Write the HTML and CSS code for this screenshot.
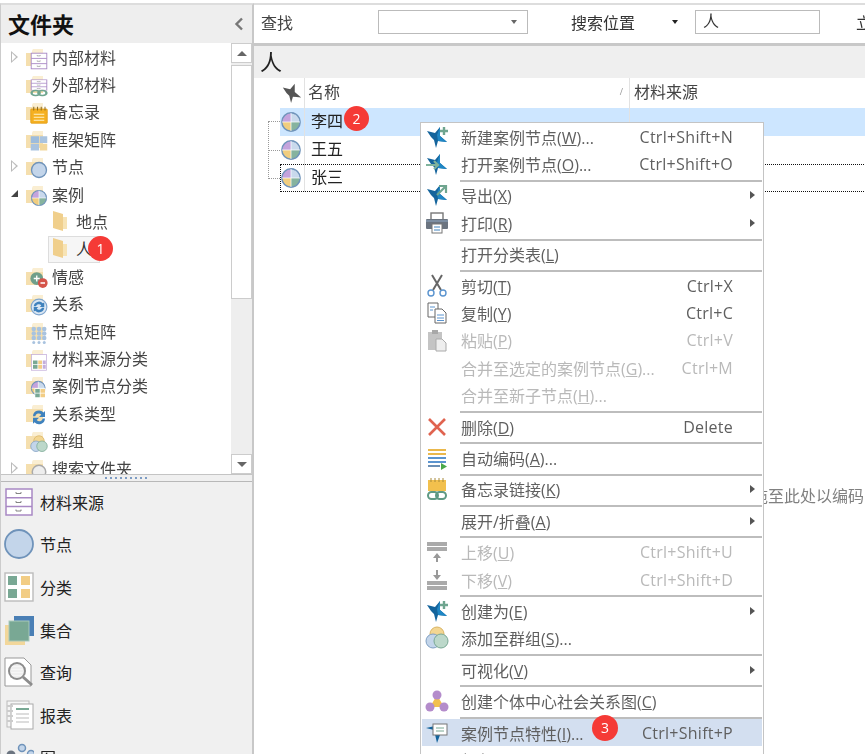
FILE: index.html
```html
<!DOCTYPE html>
<html lang="zh-CN">
<head>
    <meta charset="UTF-8">
    <meta name="viewport" content="width=device-width, initial-scale=1.0">
    <title>文件夹 - 案例</title>
    <link rel="stylesheet" href="styles.css">
</head>
<body>
    <!-- 图标定义 -->
    <svg class="defs" width="0" height="0">
        <symbol id="folder" viewBox="0 0 24 24"><path d="M1 6h6l1-4h10v17H1z" fill="#f5dfae"/><path d="M7 6l1-4h10v4z" fill="#faeed2"/></symbol>
        <symbol id="folder-open" viewBox="0 0 24 24"><path d="M1 2l10 3v17l-10-3z" fill="#f0cf8c"/><path d="M11 8h4v12h-4z" fill="#f7e3b4"/></symbol>
        <symbol id="pie" viewBox="0 0 24 24"><path d="M12 2a10 10 0 0 0-10 10h10z" fill="#c4a3dc"/><path d="M12 2a10 10 0 0 1 10 10H12z" fill="#c9d9ec"/><path d="M2 12a10 10 0 0 0 10 10V12z" fill="#f0cd7f"/><path d="M22 12a10 10 0 0 1-10 10V12z" fill="#86b39e"/><circle cx="12" cy="12" r="10" fill="none" stroke="#6f93ba" stroke-width="1.600"/><path d="M12 2v20M2 12h20" stroke="#fff" stroke-width=".8"/></symbol>
        <symbol id="drawer" viewBox="0 0 30 30" preserveAspectRatio="none"><rect x="2" y="2" width="26" height="26" fill="#fff" stroke="#a888c4" stroke-width="1.500"/><path d="M2 10.700h26M2 19.400h26" stroke="#a888c4" stroke-width="1.500"/><path d="M12 5v1.500h5V5M12 14v1.500h5V14M12 22.500v1.500h5v-1.500" fill="none" stroke="#777" stroke-width=".9"/></symbol>
        <symbol id="grid" viewBox="0 0 30 30"><rect x="1" y="1" width="28" height="28" fill="#fff" stroke="#bbb" stroke-width="1.400"/><rect x="4" y="4" width="9" height="9" fill="#79a894"/><rect x="17" y="4" width="9" height="9" fill="#f2cd85"/><rect x="4" y="17" width="9" height="9" fill="#79a894"/><rect x="17" y="17" width="9" height="9" fill="#f2cd85"/></symbol>
        <symbol id="star" viewBox="0 0 24 24"><path d="M2 6l8 2 5-6v9l7 6-9-1-2 7-2-8-3-3z" fill="#14649c"/><path d="M15 2v9l7 6-9-1-1-6z" fill="#1f86c4"/></symbol>
        <symbol id="links" viewBox="0 0 24 16" preserveAspectRatio="none"><rect x="2" y="3" width="11" height="10" rx="5" fill="none" stroke="#6fa58f" stroke-width="3"/><rect x="11" y="3" width="11" height="10" rx="5" fill="none" stroke="#6fa58f" stroke-width="3"/></symbol>
        <symbol id="circles" viewBox="0 0 24 24"><circle cx="12" cy="8" r="7" fill="#f3d692" stroke="#d9b464"/><circle cx="8" cy="15" r="7" fill="#c3d5ea" stroke="#7f9fc2"/><circle cx="16" cy="15" r="7" fill="#bcd8ca" stroke="#79a894"/></symbol>
        <symbol id="cycle" viewBox="0 0 24 24"><circle cx="12" cy="12" r="10.500" fill="#dbe7f3" stroke="#7fa6cf" stroke-width="1.500"/><path d="M5 11a7 7 0 0 1 12-4l2-1v6h-6l2-2a4 4 0 0 0-7 1zM19 13a7 7 0 0 1-12 4l-2 1v-6h6l-2 2a4 4 0 0 0 7-1z" fill="#3f82bd"/></symbol>
        <symbol id="dots" viewBox="0 0 24 24"><g fill="#a9c3df"><circle cx="5" cy="4" r="3"/><circle cx="12" cy="4" r="3"/><circle cx="19" cy="4" r="3"/><circle cx="5" cy="10" r="3"/><circle cx="12" cy="10" r="3"/><circle cx="19" cy="10" r="3"/><circle cx="5" cy="16" r="3"/><circle cx="12" cy="16" r="3"/><circle cx="19" cy="16" r="3"/><circle cx="5" cy="22" r="2"/><circle cx="12" cy="22" r="2"/><circle cx="19" cy="22" r="2"/></g></symbol>
    </svg>

    <div class="app">
        <aside class="sidebar">
            <div class="side-head">
                <h2>文件夹</h2>
                <svg class="collapse" width="10" height="14" viewBox="0 0 10 14"><path d="M8 1.500L2.500 7 8 12.500" fill="none" stroke="#777" stroke-width="2.400"/></svg>
            </div>
            <div class="tree-wrap">
                <ul class="tree">
                    <li><span class="twisty closed"></span><span class="ico"><svg><use href="#folder"/></svg><svg class="over"><use href="#drawer"/></svg></span>内部材料</li>
                    <li><span class="twisty"></span><span class="ico"><svg><use href="#folder"/></svg><svg class="over short"><use href="#drawer"/></svg><svg class="over low"><use href="#links"/></svg></span>外部材料</li>
                    <li><span class="twisty"></span><span class="ico"><svg><use href="#folder"/></svg><svg class="over" viewBox="0 0 24 24"><rect x="1" y="4" width="22" height="19" rx="1" fill="#f5b020" stroke="#dd9a12"/><path d="M5 11h14M5 15h14M5 19h14" stroke="#fff2c8" stroke-width="1.400"/><path d="M5 1v5M10 1v5M15 1v5M20 1v5" stroke="#8a6a20" stroke-width="1.300"/></svg></span>备忘录</li>
                    <li><span class="twisty"></span><span class="ico"><svg><use href="#folder"/></svg><svg class="over" viewBox="0 0 24 24"><rect x="1" y="3" width="11" height="9" fill="#9dbcdc"/><rect x="13" y="3" width="10" height="9" fill="#a9c3df"/><rect x="1" y="13" width="11" height="9" fill="#a9c3df"/><rect x="13" y="13" width="10" height="9" fill="#f2d79b"/></svg></span>框架矩阵</li>
                    <li><span class="twisty closed"></span><span class="ico"><svg><use href="#folder"/></svg><svg class="over" viewBox="0 0 24 24"><circle cx="12" cy="12" r="10" fill="#c3d5ea" stroke="#6f93ba" stroke-width="1.800"/></svg></span>节点</li>
                    <li><span class="twisty open"></span><span class="ico"><svg><use href="#folder"/></svg><svg class="over"><use href="#pie"/></svg></span>案例</li>
                    <li class="child"><span class="ico small"><svg><use href="#folder-open"/></svg></span>地点</li>
                    <li class="child current"><span class="ico small"><svg><use href="#folder-open"/></svg></span>人<span class="badge tree-badge">1</span></li>
                    <li><span class="twisty"></span><span class="ico"><svg><use href="#folder"/></svg><svg class="over" viewBox="0 0 24 24"><circle cx="9" cy="10" r="8.500" fill="#6f9f8b"/><circle cx="17" cy="16" r="6.500" fill="#d5544a"/><path d="M5 10h8M9 6v8M14 16h6" stroke="#fff" stroke-width="1.800"/></svg></span>情感</li>
                    <li><span class="twisty"></span><span class="ico"><svg><use href="#folder"/></svg><svg class="over"><use href="#cycle"/></svg></span>关系</li>
                    <li><span class="twisty"></span><span class="ico"><svg><use href="#folder"/></svg><svg class="over"><use href="#dots"/></svg></span>节点矩阵</li>
                    <li><span class="twisty"></span><span class="ico"><svg><use href="#folder"/></svg><svg class="over" viewBox="0 0 24 24"><rect x="2" y="2" width="20" height="21" fill="#fff" stroke="#c4aedb"/><rect x="4" y="10" width="6" height="5" fill="#79a894"/><rect x="11" y="10" width="5" height="5" fill="#f2cd85"/><rect x="17" y="10" width="4" height="5" fill="#c4aedb"/><rect x="4" y="16" width="6" height="5" fill="#79a894"/><rect x="11" y="16" width="5" height="5" fill="#f2cd85"/><rect x="17" y="16" width="4" height="5" fill="#c4aedb"/></svg></span>材料来源分类</li>
                    <li><span class="twisty"></span><span class="ico"><svg><use href="#folder"/></svg><svg class="over" viewBox="0 0 24 24"><use href="#pie" width="22" height="22"/><rect x="6" y="11" width="15" height="12" fill="#fff"/><rect x="7" y="12" width="6" height="5" fill="#79a894"/><rect x="14" y="12" width="6" height="5" fill="#f2cd85"/><rect x="7" y="18" width="6" height="5" fill="#79a894"/><rect x="14" y="18" width="6" height="5" fill="#f2cd85"/></svg></span>案例节点分类</li>
                    <li><span class="twisty"></span><span class="ico"><svg><use href="#folder"/></svg><svg class="over" viewBox="0 0 24 24"><path d="M4 11a8 8 0 0 1 14-5l2-2v8h-8l3-3a4.500 4.500 0 0 0-8 2zM20 14a8 8 0 0 1-14 5l-2 2v-8h8l-3 3a4.500 4.500 0 0 0 8-2z" fill="#3f82bd"/></svg></span>关系类型</li>
                    <li><span class="twisty"></span><span class="ico"><svg><use href="#folder"/></svg><svg class="over"><use href="#circles"/></svg></span>群组</li>
                    <li><span class="twisty closed"></span><span class="ico"><svg><use href="#folder"/></svg><svg class="over" viewBox="0 0 24 24"><circle cx="12" cy="12" r="9" fill="#eee" stroke="#aaa" stroke-width="2"/></svg></span>搜索文件夹</li>
                </ul>
                <div class="scrollbar">
                    <div class="sb-btn"><span class="tri-up"></span></div>
                    <div class="sb-thumb"></div>
                    <div class="sb-track"></div>
                    <div class="sb-btn"><span class="tri-down"></span></div>
                </div>
            </div>
            <div class="splitter"><span class="grip"></span></div>
            <ul class="nav">
                <li><svg class="nav-ico"><use href="#drawer"/></svg>材料来源</li>
                <li><svg class="nav-ico" viewBox="0 0 30 30"><circle cx="15" cy="15" r="14" fill="#c3d5ea" stroke="#6f93ba" stroke-width="1.800"/></svg>节点</li>
                <li><svg class="nav-ico"><use href="#grid"/></svg>分类</li>
                <li><svg class="nav-ico" viewBox="0 0 30 30"><rect x="10" y="1" width="20" height="20" fill="#4a7fb5"/><rect x="1" y="10" width="20" height="20" fill="#f2d79b"/><rect x="5" y="6" width="20" height="20" fill="#79a894" stroke="#a9c9bb"/></svg>集合</li>
                <li><svg class="nav-ico" viewBox="0 0 30 30"><path d="M1 1h19l7 7v21H1z" fill="#fff" stroke="#999"/><path d="M6 8h12M6 11h16M6 14h16M6 17h16M6 20h10" stroke="#ddd"/><circle cx="13" cy="14" r="8" fill="#f0f0f0" fill-opacity=".6" stroke="#8c8c8c" stroke-width="2"/><path d="M19 20l9 8" stroke="#8c8c8c" stroke-width="3"/></svg>查询</li>
                <li><svg class="nav-ico" viewBox="0 0 30 30"><rect x="3" y="1" width="22" height="26" fill="#f5f5f5" stroke="#bbb"/><rect x="7" y="4" width="22" height="25" fill="#fff" stroke="#aaa"/><path d="M12 9h13" stroke="#79a894" stroke-width="2"/><path d="M12 14h13M12 18h13M12 22h13" stroke="#bbb"/><path d="M3 6h6M3 11h6M3 16h6M3 21h6" stroke="#ccc" stroke-width="2"/></svg>报表</li>
                <li><svg class="nav-ico" viewBox="0 0 30 30"><circle cx="18" cy="6" r="3.500" fill="#c3d5ea" stroke="#6f93ba" stroke-width="1.500"/><circle cx="7" cy="13" r="4.500" fill="#6b7480"/><circle cx="27" cy="12" r="3.500" fill="#c3d5ea" stroke="#6f93ba" stroke-width="1.500"/></svg>图</li>
            </ul>
        </aside>

        <main class="main">
            <div class="toolbar">
                <span class="find-label">查找</span>
                <div class="combo"><span class="tri-down small"></span></div>
                <span class="where-label">搜索位置</span>
                <span class="tri-down small dark"></span>
                <div class="search-box">人</div>
                <span class="now-label">立即查找</span>
            </div>
            <div class="title-bar">人</div>
            <div class="grid-head">
                <div class="col-pin"><svg width="22" height="22" viewBox="0 0 24 24"><path d="M2 6l8 2 5-6v9l7 6-9-1-2 7-2-8-3-3z" fill="#555"/></svg></div>
                <div class="col-name"><span class="cell">名称</span><span class="sort">/</span></div>
                <div class="col-src"><span class="cell">材料来源</span></div>
            </div>
            <div class="grid-body">
                <div class="row selected">
                    <div class="col-pin"><svg width="24" height="24"><use href="#pie"/></svg></div>
                    <div class="col-name"><span class="cell">李四</span><span class="badge row-badge">2</span></div>
                    <div class="col-src"></div>
                </div>
                <div class="row">
                    <div class="col-pin"><svg width="24" height="24"><use href="#pie"/></svg></div>
                    <div class="col-name"><span class="cell">王五</span></div>
                    <div class="col-src"></div>
                </div>
                <div class="row focused">
                    <div class="col-pin"><svg width="24" height="24"><use href="#pie"/></svg></div>
                    <div class="col-name"><span class="cell">张三</span></div>
                    <div class="col-src"></div>
                </div>
                <div class="tree-lines"></div>
            </div>
            <p class="drop-hint">将要编码的内容拖至此处以编码</p>
        </main>

        <!-- 右键菜单 -->
        <div class="menu">
            <div class="item"><span class="m-ico"><svg viewBox="0 0 24 24"><use href="#star"/><path d="M19 2v8M15 6h8" stroke="#6fa58f" stroke-width="2.400"/></svg></span><span class="label">新建案例节点(<u>W</u>)...</span><span class="key">Ctrl+Shift+N</span><span class="sub"></span></div>
            <div class="item"><span class="m-ico"><svg viewBox="0 0 24 24"><use href="#star"/><path d="M1 13h11M9 9l4 4-4 4" fill="none" stroke="#7fb39c" stroke-width="2.200"/></svg></span><span class="label">打开案例节点(<u>O</u>)...</span><span class="key">Ctrl+Shift+O</span><span class="sub"></span></div>
            <div class="sep"></div>
            <div class="item"><span class="m-ico"><svg viewBox="0 0 24 24"><use href="#star"/><path d="M12 12l8-8M14 3h7v7" fill="none" stroke="#6fa58f" stroke-width="2.200"/></svg></span><span class="label">导出(<u>X</u>)</span><span class="key"></span><span class="sub arrow"></span></div>
            <div class="item"><span class="m-ico"><svg viewBox="0 0 24 24"><rect x="6" y="2" width="12" height="7" fill="#fff" stroke="#777" stroke-width="1.400"/><rect x="1" y="8" width="22" height="10" rx="1" fill="#6b7480"/><path d="M1 10h22" stroke="#8fa8c4"/><rect x="7" y="13" width="10" height="9" fill="#fff" stroke="#777"/><path d="M9 16h6M9 19h6" stroke="#3f82bd"/></svg></span><span class="label">打印(<u>R</u>)</span><span class="key"></span><span class="sub arrow"></span></div>
            <div class="sep"></div>
            <div class="item"><span class="m-ico"></span><span class="label">打开分类表(<u>L</u>)</span><span class="key"></span><span class="sub"></span></div>
            <div class="sep"></div>
            <div class="item"><span class="m-ico"><svg viewBox="0 0 24 24"><path d="M7 1l9 15M17 1L8 16" stroke="#666" stroke-width="2" fill="none"/><circle cx="6" cy="19" r="3" fill="none" stroke="#5b94cf" stroke-width="1.400"/><circle cx="18" cy="19" r="3" fill="none" stroke="#5b94cf" stroke-width="1.400"/></svg></span><span class="label">剪切(<u>T</u>)</span><span class="key">Ctrl+X</span><span class="sub"></span></div>
            <div class="item"><span class="m-ico"><svg viewBox="0 0 24 24"><path d="M3 2h10v14H3z" fill="#fff" stroke="#666"/><path d="M10 8h7l4 4v10H10z" fill="#fff" stroke="#666"/><path d="M5 6h5M5 9h3M12 14h7M12 17h7M12 19.500h7" stroke="#5b94cf"/></svg></span><span class="label">复制(<u>Y</u>)</span><span class="key">Ctrl+C</span><span class="sub"></span></div>
            <div class="item off"><span class="m-ico"><svg viewBox="0 0 24 24"><rect x="3" y="4" width="14" height="18" fill="#c4c4c4"/><rect x="7" y="2" width="6" height="4" fill="#a8a8a8"/><path d="M11 11h6l4 4v8H11z" fill="#eee" stroke="#aaa"/></svg></span><span class="label">粘贴(<u>P</u>)</span><span class="key">Ctrl+V</span><span class="sub"></span></div>
            <div class="item off"><span class="m-ico"></span><span class="label">合并至选定的案例节点(<u>G</u>)...</span><span class="key">Ctrl+M</span><span class="sub"></span></div>
            <div class="item off"><span class="m-ico"></span><span class="label">合并至新子节点(<u>H</u>)...</span><span class="key"></span><span class="sub"></span></div>
            <div class="sep"></div>
            <div class="item"><span class="m-ico"><svg viewBox="0 0 24 24"><path d="M4 4l16 16M20 4L4 20" stroke="#e0634f" stroke-width="2.600"/></svg></span><span class="label">删除(<u>D</u>)</span><span class="key">Delete</span><span class="sub"></span></div>
            <div class="sep"></div>
            <div class="item"><span class="m-ico"><svg viewBox="0 0 24 24"><path d="M3 4h18M3 8h18" stroke="#eab84c" stroke-width="2"/><path d="M3 12h18M3 16h18" stroke="#5b94cf" stroke-width="2"/><path d="M3 20h12" stroke="#6b8fb5" stroke-width="2"/><path d="M16 17l6 3.500-6 3.500z" fill="#4aa84a"/></svg></span><span class="label">自动编码(<u>A</u>)...</span><span class="key"></span><span class="sub"></span></div>
            <div class="sep"></div>
            <div class="item"><span class="m-ico"><svg viewBox="0 0 24 24"><rect x="3" y="3" width="18" height="11" fill="#f2c04d"/><path d="M6 1v4M10 1v4M14 1v4M18 1v4" stroke="#a88a3a"/><rect x="3" y="15" width="10" height="7" rx="3.500" fill="none" stroke="#5f9a84" stroke-width="2"/><rect x="11" y="15" width="10" height="7" rx="3.500" fill="none" stroke="#5f9a84" stroke-width="2"/></svg></span><span class="label">备忘录链接(<u>K</u>)</span><span class="key"></span><span class="sub arrow"></span></div>
            <div class="sep"></div>
            <div class="item"><span class="m-ico"></span><span class="label">展开/折叠(<u>A</u>)</span><span class="key"></span><span class="sub arrow"></span></div>
            <div class="sep"></div>
            <div class="item off"><span class="m-ico"><svg viewBox="0 0 24 24"><path d="M2 2h20v4H2zM2 7h20v4H2z" fill="#aaa"/><path d="M12 13l-4 5h3v4h2v-4h3z" fill="#999"/></svg></span><span class="label">上移(<u>U</u>)</span><span class="key">Ctrl+Shift+U</span><span class="sub"></span></div>
            <div class="item off"><span class="m-ico"><svg viewBox="0 0 24 24"><path d="M2 13h20v4H2zM2 18h20v4H2z" fill="#aaa"/><path d="M12 12l-4-5h3V2h2v5h3z" fill="#999"/></svg></span><span class="label">下移(<u>V</u>)</span><span class="key">Ctrl+Shift+D</span><span class="sub"></span></div>
            <div class="sep"></div>
            <div class="item"><span class="m-ico"><svg viewBox="0 0 24 24"><use href="#star"/><path d="M19 2v8M15 6h8" stroke="#6fa58f" stroke-width="2.400"/></svg></span><span class="label">创建为(<u>E</u>)</span><span class="key"></span><span class="sub arrow"></span></div>
            <div class="item"><span class="m-ico"><svg><use href="#circles"/></svg></span><span class="label">添加至群组(<u>S</u>)...</span><span class="key"></span><span class="sub"></span></div>
            <div class="sep"></div>
            <div class="item"><span class="m-ico"></span><span class="label">可视化(<u>V</u>)</span><span class="key"></span><span class="sub arrow"></span></div>
            <div class="sep"></div>
            <div class="item"><span class="m-ico"><svg viewBox="0 0 24 24"><path d="M12 6L5 18h14z" fill="#f2c04d"/><circle cx="12" cy="6" r="4.500" fill="#b48ccb"/><circle cx="5" cy="18" r="4.500" fill="#b48ccb"/><circle cx="19" cy="18" r="4.500" fill="#b48ccb"/></svg></span><span class="label">创建个体中心社会关系图(<u>C</u>)</span><span class="key"></span><span class="sub"></span></div>
            <div class="sep"></div>
            <div class="item hover"><span class="m-ico"><svg viewBox="0 0 24 24"><path d="M1 7l8 2 3 13 3-8-5-9z" fill="#14649c"/><rect x="8" y="3" width="14" height="11" fill="#fff" stroke="#777"/><path d="M11 7h8M11 10h8" stroke="#79a894"/></svg></span><span class="label">案例节点特性(<u>I</u>)...</span><span class="key">Ctrl+Shift+P</span><span class="sub"></span><span class="badge menu-badge">3</span></div>
            <div class="item"><span class="m-ico"></span><span class="label">颜色(<u>O</u>)</span><span class="key"></span><span class="sub arrow"></span></div>
        </div>
    </div>
</body>
</html>
```

FILE: styles.css
```css
* {
    margin: 0;
    padding: 0;
    box-sizing: border-box;
}
body {
    background: white;
    font-family: 'Open Sans', 'Noto Sans CJK SC', sans-serif;
    font-size: 16px;
    color: #333;
    overflow: hidden;
}
ul {
    list-style: none;
}
.defs {
    position: absolute;
}
.app {
    position: relative;
    display: flex;
    height: 754px;
    padding-top: 3px;
    overflow: hidden;
    filter: blur(0.35px);
}

/* 左侧 */
.sidebar {
    width: 254px;
    flex-shrink: 0;
    display: flex;
    flex-direction: column;
    border-top: 2px solid #ddd;
    border-left: 1px solid #ccc;
    border-right: 2px solid #c8c8c8;
}
.side-head {
    height: 38px;
    flex-shrink: 0;
    background: #eeeeee;
    display: flex;
    align-items: center;
    justify-content: space-between;
    padding: 0 8px 0 7px;
}
.side-head h2 {
    font-size: 22px;
    color: #111;
    line-height: 1;
}
.tree-wrap {
    height: 431px;
    flex-shrink: 0;
    display: flex;
    overflow: hidden;
}
.tree {
    flex: 1;
}
.tree li {
    position: relative;
    height: 27.400px;
    display: flex;
    align-items: center;
    white-space: nowrap;
    color: #444;
}
.tree li.child {
    padding-left: 51px;
}
.tree li.current {
    color: #333;
    isolation: isolate;
}
.tree li.current::before {
    content: "";
    position: absolute;
    z-index: -1;
    left: 47px;
    top: 1px;
    width: 50px;
    height: 25px;
    border: 1px solid #ddd;
    background: #f6f6f6;
}
.twisty {
    position: relative;
    width: 23px;
    height: 12px;
    flex-shrink: 0;
    margin-left: 1px;
}
.twisty.closed::before, .twisty.closed::after {
    content: "";
    position: absolute;
    width: 0;
    height: 0;
    border-style: solid;
    border-color: transparent;
}
.twisty.closed::before {
    left: 9px;
    top: 0;
    border-width: 6px 0 6px 7px;
    border-left-color: #bbb;
}
.twisty.closed::after {
    left: 10px;
    top: 2px;
    border-width: 4px 0 4px 4.500px;
    border-left-color: white;
}
.twisty.open::before {
    content: "";
    display: block;
    width: 0;
    height: 0;
    margin: 2px 0 0 9px;
    border-bottom: 7px solid #444;
    border-left: 7px solid transparent;
}
.ico {
    position: relative;
    width: 27px;
    height: 24px;
    flex-shrink: 0;
}
.ico svg {
    position: absolute;
    left: 0;
    top: 2px;
    width: 24px;
    height: 24px;
}
.ico svg.over {
    left: 5px;
    top: 7px;
    width: 18px;
    height: 18px;
}
.ico svg.over.short {
    height: 12px;
}
.ico svg.over.low {
    top: 17px;
    height: 8px;
}
.ico.small {
    width: 24px;
}
.ico.small svg {
    top: 0;
}
.scrollbar {
    width: 21px;
    flex-shrink: 0;
    display: flex;
    flex-direction: column;
    background: #eeeeee;
}
.sb-btn {
    height: 20px;
    flex-shrink: 0;
    background: white;
    border: 1px solid #ccc;
    display: flex;
    align-items: center;
    justify-content: center;
}
.sb-thumb {
    height: 234px;
    flex-shrink: 0;
    margin-top: 2px;
    background: white;
    border: 1px solid #ccc;
}
.sb-track {
    flex: 1;
}
.tri-up {
    border-bottom: 5px solid #666;
    border-left: 5px solid transparent;
    border-right: 5px solid transparent;
}
.tri-down {
    flex-shrink: 0;
    border-top: 5px solid #666;
    border-left: 5px solid transparent;
    border-right: 5px solid transparent;
}
.tri-down.small {
    border-top-width: 4px;
    border-left-width: 3px;
    border-right-width: 3px;
}
.tri-down.dark {
    border-top-color: #222;
    margin: 0 17px 0 37px;
}
.splitter {
    height: 8px;
    flex-shrink: 0;
    background: #f0f0f0;
    border-top: 1px solid #c4c4c4;
    border-bottom: 1px solid #b8b8b8;
    display: flex;
    align-items: center;
    justify-content: center;
}
.grip {
    width: 44px;
    height: 2px;
    background: repeating-linear-gradient(90deg, #7d9cc4 0 2px, transparent 2px 5px);
}
.nav {
    flex: 1;
    background: #f0f0f0;
}
.nav li {
    height: 42.600px;
    padding-bottom: 3px;
    display: flex;
    align-items: center;
    color: #222;
    white-space: nowrap;
}
.nav-ico {
    width: 30px;
    height: 30px;
    margin: 0 6px 0 3px;
    flex-shrink: 0;
}

/* 右侧 */
.main {
    flex: 1;
    min-width: 0;
    border-top: 2px solid #ddd;
}
.toolbar {
    height: 38px;
    display: flex;
    align-items: center;
    padding: 0 0 4px 7px;
    white-space: nowrap;
}
.find-label {
    width: 117px;
    flex-shrink: 0;
    color: #444;
}
.combo {
    width: 150px;
    height: 24px;
    flex-shrink: 0;
    border: 1px solid #bbb;
    display: flex;
    align-items: center;
    justify-content: flex-end;
    padding-right: 10px;
}
.where-label {
    flex-shrink: 0;
    margin-left: 43px;
    color: #333;
}
.search-box {
    width: 125px;
    height: 24px;
    flex-shrink: 0;
    border: 1px solid #bbb;
    padding-left: 7px;
    line-height: 20px;
    color: #333;
}
.now-label {
    flex-shrink: 0;
    margin-left: 36px;
}
.title-bar {
    height: 35px;
    border-top: 3px solid #c8c8c8;
    background: #efefef;
    padding-left: 6px;
    font-size: 22px;
    line-height: 31px;
    color: #222;
}
.grid-head, .row {
    display: flex;
    margin-left: 26px;
}
.grid-head {
    height: 30px;
}
.col-pin {
    width: 25px;
    flex-shrink: 0;
    display: flex;
    align-items: center;
    justify-content: center;
    border-right: 1px solid #e2e2e2;
}
.col-name {
    position: relative;
    width: 325px;
    flex-shrink: 0;
    display: flex;
    align-items: center;
    padding-left: 3px;
    border-right: 1px solid #e2e2e2;
}
.col-src {
    flex: 1;
    display: flex;
    align-items: center;
    padding-left: 4px;
}
.cell {
    margin-top: -5px;
}
.grid-head .col-name, .grid-head .col-src {
    color: #444;
}
.sort {
    position: absolute;
    right: 6px;
    top: 7px;
    font-size: 9px;
    color: #999;
}
.grid-body {
    position: relative;
}
.row {
    height: 28px;
    color: #222;
}
.row .col-name {
    padding-left: 6px;
}
.row .col-pin {
    padding-right: 2px;
}
.row.selected {
    background: #cde6ff;
}
.row.focused {
    margin-right: -3px;
    outline: 1px dotted #111;
    outline-offset: -1px;
}
.tree-lines {
    position: absolute;
    left: 14px;
    top: 13px;
    width: 12px;
    height: 58px;
    border-left: 1px dotted #999;
    border-top: 1px dotted #999;
    border-bottom: 1px dotted #999;
    background: repeating-linear-gradient(90deg, #999 0 1px, transparent 1px 2px) 0 28px / 100% 1px no-repeat;
}
.drop-hint {
    margin-top: 291px;
    padding-left: 386px;
    color: #808080;
    white-space: nowrap;
}
.badge {
    position: absolute;
    width: 25px;
    height: 25px;
    border-radius: 50%;
    background: #f53a36;
    color: white;
    font-size: 14px;
    line-height: 25px;
    text-align: center;
    z-index: 2;
}
.tree-badge {
    left: 87px;
    top: 1px;
}
.row-badge {
    left: 39px;
    top: -2px;
}

/* 右键菜单 */
.menu {
    position: absolute;
    left: 420px;
    top: 122px;
    width: 344px;
    padding: 0 1px;
    background: white;
    border: 1px solid #c4c4c4;
    color: #5f5f5f;
    z-index: 3;
}
.item {
    position: relative;
    height: 27.400px;
    display: grid;
    grid-template-columns: 39px 1fr auto 29px;
    align-items: center;
    white-space: nowrap;
}
.item.off {
    color: #b9b9b9;
}
.item.hover {
    background: #d3dff0;
}
.m-ico {
    display: flex;
    justify-content: center;
    padding-right: 10px;
}
.m-ico svg {
    width: 24px;
    height: 24px;
}
.key {
    letter-spacing: 0.25px;
}
.arrow::before {
    content: "";
    display: block;
    width: 0;
    height: 0;
    margin-left: 17px;
    border-left: 5px solid #555;
    border-top: 4px solid transparent;
    border-bottom: 4px solid transparent;
}
.sep {
    height: 4px;
    margin-left: 38px;
    border-bottom: 2px solid #bdbdbd;
}
.menu-badge {
    left: 170px;
    top: -4px;
    width: 26px;
    height: 26px;
    line-height: 26px;
}
```
